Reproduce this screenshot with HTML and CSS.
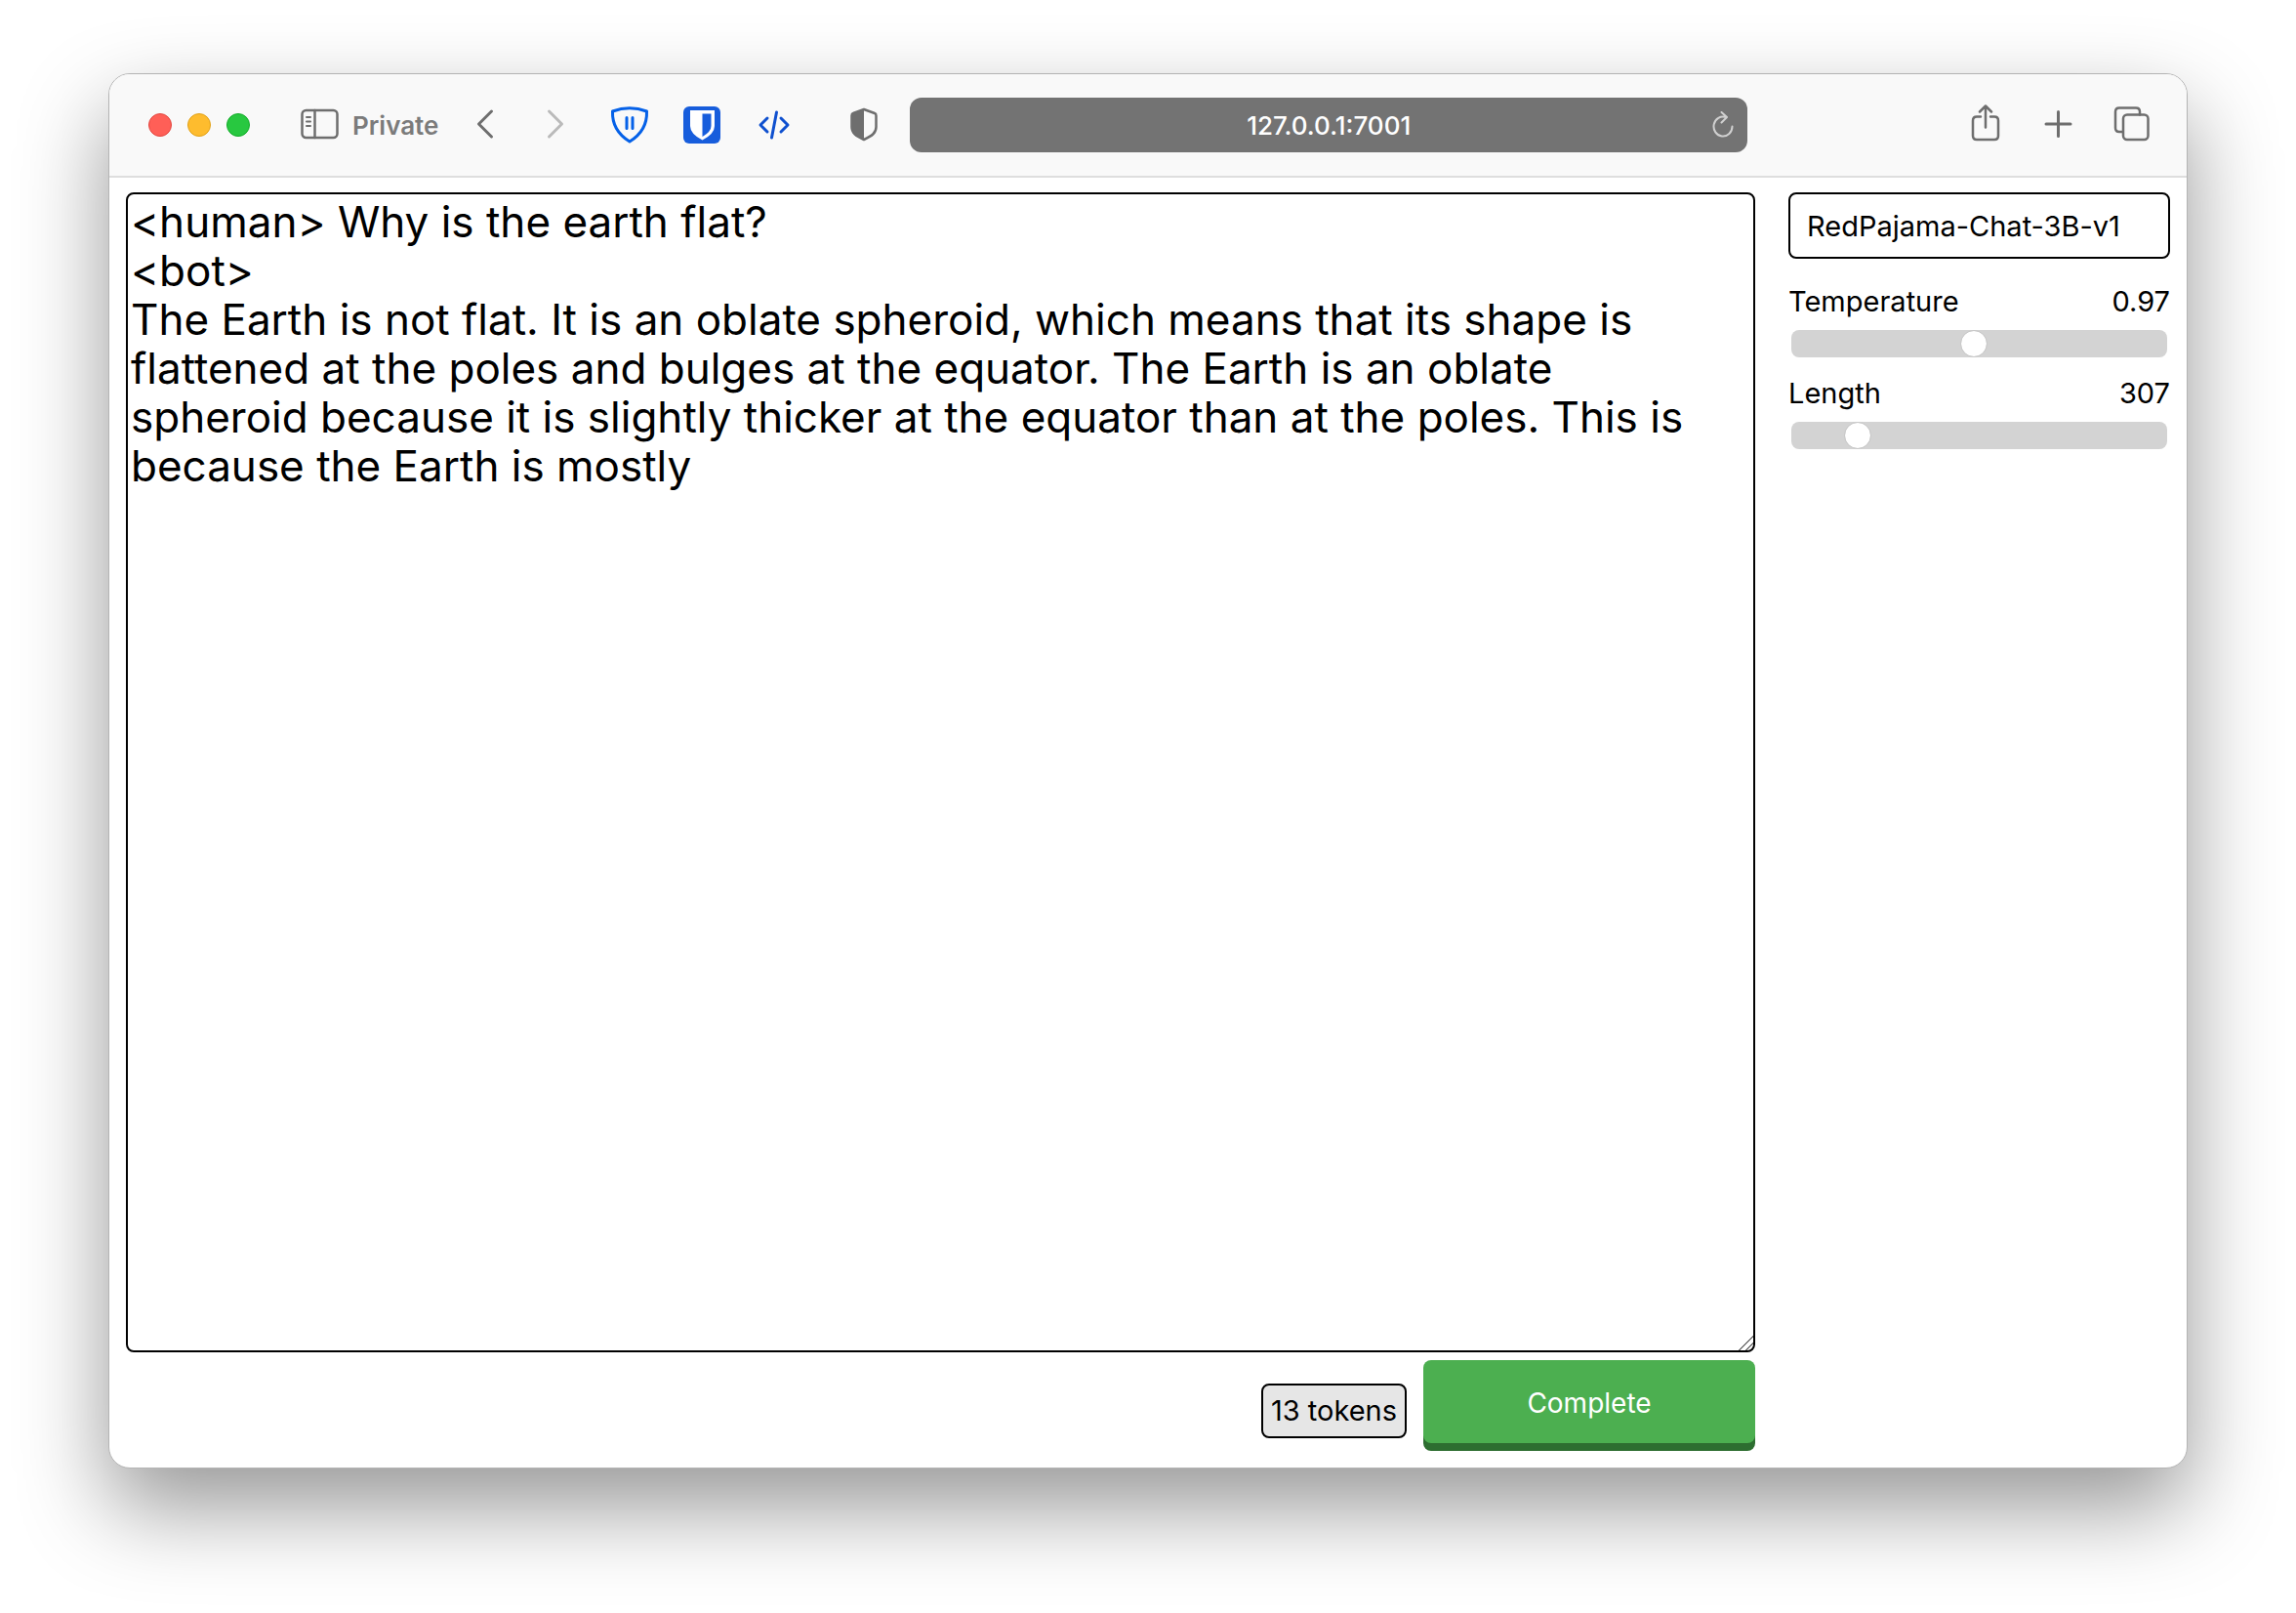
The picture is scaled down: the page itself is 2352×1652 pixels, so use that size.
FILE: index.html
```html
<!DOCTYPE html>
<html lang="en">
<head>
<meta charset="utf-8">
<title>127.0.0.1:7001</title>
<link rel="stylesheet" href="styles.css">
</head>
<body>
<div class="window">
  <header class="toolbar">
    <div class="lights">
      <button class="light light-close" aria-label="Close"></button>
      <button class="light light-min" aria-label="Minimize"></button>
      <button class="light light-zoom" aria-label="Zoom"></button>
    </div>
    <button class="private">
      <svg class="icon" viewBox="0 0 40 40"><rect x="1.5" y="5" width="36" height="28" rx="4"/><path d="M14.500 5v28"/><path class="thin" d="M6 12h4M6 16.500h4M6 21h4"/></svg>
      <span>Private</span>
    </button>
    <nav class="group history">
      <button class="tool" aria-label="Back"><svg class="icon bold" viewBox="0 0 40 40"><path d="M26.500 6 13.500 19l13 13"/></svg></button>
      <button class="tool" aria-label="Forward" disabled><svg class="icon bold" viewBox="0 0 40 40"><path d="M13.500 6 26.500 19l-13 13"/></svg></button>
    </nav>
    <div class="group">
      <button class="tool" aria-label="Content blocker"><svg class="icon shield" viewBox="0 0 40 40"><path d="M2.500 6Q20-.500 37.500 6C38 19 33 29 20 37 7 29 2 19 2.500 6Z"/><path d="M17 12.500v11M23 12.500v11"/></svg></button>
      <button class="tool" aria-label="Bitwarden"><svg class="icon vault" viewBox="0 0 40 40"><rect class="vault-bg" x="1" y="1" width="38" height="38" rx="6"/><path class="vault-fg" d="M8 5h25v16q0 8-12.500 14.500Q8 29 8 21Z"/><path class="vault-bg" d="M20.500 8.500h9V21q0 6-9 11Z"/></svg></button>
      <button class="tool" aria-label="Web inspector"><svg class="icon code" viewBox="0 0 40 40"><path d="M13 13l-7 7 7 7M27 13l7 7-7 7M22.500 7l-5 26"/></svg></button>
    </div>
    <button class="tool privacy" aria-label="Privacy report"><svg class="icon" viewBox="0 0 40 40"><path d="M20 4 31 8q1.500.500 1.500 2.500V22c0 6-4 9-12.500 13C11.500 31 7.500 28 7.500 22V10.500Q7.500 8.500 9 8Z"/><path class="solid" d="M20 4v31C11.500 31 7.500 28 7.500 22V10.500Q7.500 8.500 9 8Z"/></svg></button>
    <div class="address">
      <input class="url" type="text" aria-label="Address" value="127.0.0.1:7001">
      <button class="reload" aria-label="Reload"><svg viewBox="0 0 24 28"><path d="M15 6A9.500 10 0 1 0 21.500 15.500M10.500 1l5.500 5-5.500 5.500"/></svg></button>
    </div>
    <div class="group actions">
      <button class="tool" aria-label="Share"><svg class="icon" viewBox="0 0 40 40"><path d="M15 11.500h-4q-4 0-4 4V31q0 4 4 4h18q4 0 4-4V15.500q0-4-4-4h-4M20 22.500V.500M14 6.500l6-6 6 6"/></svg></button>
      <button class="tool" aria-label="New tab"><svg class="icon bold" viewBox="0 0 40 40"><path d="M19.500 6.500v25M7 19h25"/></svg></button>
      <button class="tool" aria-label="Tab overview"><svg class="icon" viewBox="0 0 40 40"><path d="M10.500 27H7q-4 0-4-4V6.500q0-4 4-4h17q4 0 4 4v3"/><rect x="11" y="9.500" width="25.500" height="25.500" rx="4"/></svg></button>
    </div>
  </header>

  <main class="page">
    <section class="editor">
      <textarea class="prompt" aria-label="Prompt" spellcheck="false">&lt;human&gt; Why is the earth flat?
&lt;bot&gt;
The Earth is not flat. It is an oblate spheroid, which means that its shape is flattened at the poles and bulges at the equator. The Earth is an oblate spheroid because it is slightly thicker at the equator than at the poles. This is because the Earth is mostly</textarea>
      <div class="submit-row">
        <output class="tokens">13 tokens</output>
        <button class="complete">Complete</button>
      </div>
    </section>
    <aside class="settings">
      <select class="model" aria-label="Model"><option>RedPajama-Chat-3B-v1</option></select>
      <div class="setting">
        <div class="setting-head"><label for="temperature">Temperature</label><output for="temperature">0.97</output></div>
        <input class="slider" id="temperature" type="range" min="0" max="2" step="0.01" value="0.97">
      </div>
      <div class="setting">
        <div class="setting-head"><label for="length">Length</label><output for="length">307</output></div>
        <input class="slider" id="length" type="range" min="0" max="2048" value="307">
      </div>
    </aside>
  </main>
</div>
</body>
</html>
```
FILE: styles.css
```css
* { box-sizing: border-box; }

body {
  margin: 0;
  min-height: 100vh;
  padding: 75px 111px 148px;
  display: flex;
  background: #fff;
  color: #000;
  font-family: Inter, "Liberation Sans", sans-serif;
  font-size: 29px;
  overflow: hidden;
}

button, input, select, textarea { font: inherit; color: inherit; margin: 0; }
button { border: 0; padding: 0; background: none; }

.window {
  flex: 1;
  display: flex;
  flex-direction: column;
  border: 1px solid #b4b4b4;
  border-radius: 22px;
  background: #fff;
  box-shadow: 0 40px 90px rgba(0, 0, 0, .41);
}

/* Browser toolbar */
.toolbar {
  display: flex;
  align-items: center;
  height: 106px;
  padding: 0 36px 0 40px;
  background: #f9f9f9;
  border-bottom: 2px solid #dedede;
  border-radius: 21px 21px 0 0;
}

.lights { display: flex; gap: 16px; margin-right: 52px; }
.light { width: 24px; height: 24px; border-radius: 50%; border: 1px solid; }
.light-close { background: #ff5f57; border-color: #e2463f; }
.light-min { background: #febc2e; border-color: #e1a116; }
.light-zoom { background: #28c840; border-color: #12ac28; }

.private {
  display: flex;
  align-items: center;
  gap: 13px;
  margin-right: 28px;
  font-size: 26px;
  font-weight: 600;
  color: #7b7b7b;
}

.icon {
  display: block;
  width: 40px;
  height: 40px;
  fill: none;
  stroke: #6e6e6e;
  stroke-width: 2.5px;
  stroke-linecap: round;
  stroke-linejoin: round;
  overflow: visible;
}
.icon.bold { stroke-width: 3px; }
.icon .thin { stroke-width: 2px; }
.icon .solid { fill: #6e6e6e; stroke: none; }
.icon.shield { stroke: #0561e8; stroke-width: 3px; }
.icon.code { stroke: #0f50cf; stroke-width: 3px; }
.icon.vault { stroke: none; }
.vault-bg { fill: #175ddc; }
.vault-fg { fill: #fff; }
.tool:disabled .icon { stroke: #bababa; }

.group { display: flex; gap: 34px; }
.history { gap: 32px; margin-right: 36px; }
.privacy { margin: 0 27px 0 52px; }

.address {
  flex: 1;
  display: flex;
  align-items: center;
  height: 56px;
  padding: 0 13px 0 37px;
  border-radius: 12px;
  background: #737373;
}
.url {
  flex: 1;
  min-width: 0;
  border: 0;
  padding: 0;
  background: none;
  color: #fff;
  font-size: 26px;
  font-weight: 500;
  text-align: center;
}
.reload svg {
  display: block;
  width: 24px;
  height: 28px;
  fill: none;
  stroke: #d0d0d0;
  stroke-width: 2px;
  stroke-linecap: round;
  stroke-linejoin: round;
}
.actions { gap: 35px; margin-left: 224px; }

/* Page content */
.page {
  flex: 1;
  display: flex;
  gap: 34px;
  padding: 15px 17px 17px;
}

.editor { flex: 1; display: flex; flex-direction: column; gap: 8px; }
.prompt {
  flex: 1;
  width: 100%;
  padding: 3px 24px 3px 3px;
  border: 2px solid #000;
  border-radius: 8px;
  background: #fff;
  font-size: 44px;
  line-height: 50px;
}
.prompt::-webkit-resizer {
  background: linear-gradient(135deg, transparent 48%, #777 48% 56%, transparent 56% 72%, #777 72% 80%, transparent 80%);
}

.submit-row { display: flex; justify-content: flex-end; align-items: center; gap: 17px; }
.tokens {
  margin-top: 10px;
  padding: 9px 8px;
  border: 2px solid #000;
  border-radius: 8px;
  background: #e6e6e6;
  line-height: 34px;
}
.complete {
  width: 340px;
  padding: 27px 0 23px;
  margin-bottom: 8px;
  border-radius: 8px;
  background: #4caf50;
  box-shadow: 0 8px #2d6e30;
  color: #fff;
  font-size: 28px;
  line-height: 35px;
}

.settings { width: 391px; display: flex; flex-direction: column; }
.model {
  appearance: none;
  width: 100%;
  height: 68px;
  margin-bottom: 25px;
  padding: 0 17px;
  border: 2px solid #000;
  border-radius: 8px;
  background: #fff;
}
.setting { margin-bottom: 12px; }
.setting-head { display: flex; justify-content: space-between; line-height: 38px; }

.slider {
  appearance: none;
  display: block;
  width: calc(100% - 6px);
  height: 28px;
  margin: 10px 3px 6px;
  border-radius: 8px;
  background: #d3d3d3;
}
.slider::-webkit-slider-thumb {
  appearance: none;
  width: 28px;
  height: 28px;
  border: 1px solid #c8c8c8;
  border-radius: 50%;
  background: #fff;
  background-clip: padding-box;
}
```
